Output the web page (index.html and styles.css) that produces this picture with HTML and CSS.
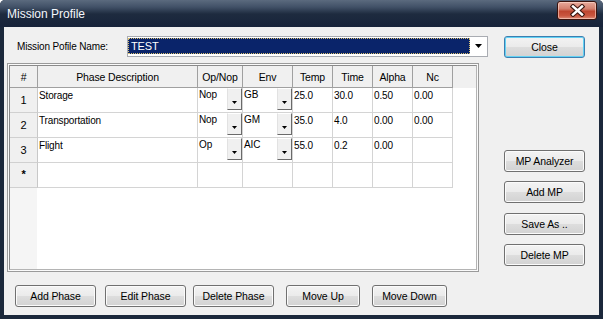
FILE: index.html
```
<!DOCTYPE html>
<html>
    <head>
        <meta charset="UTF-8">
        <title>Mission Profile</title>
        <link rel="stylesheet" href="styles.css">
    </head>

    <body>
        <div class="window">
            <div class="titlebar">
                <span class="title">Mission Profile</span>
                <span class="close-x">
                    <svg width="15" height="13" viewBox="0 0 15 13">
                        <path d="M3 2.5 L12 10.5 M12 2.5 L3 10.5" stroke="#3b1610" stroke-width="4.6" stroke-linecap="square"/>
                        <path d="M3 2.5 L12 10.5 M12 2.5 L3 10.5" stroke="#ffffff" stroke-width="2.4" stroke-linecap="square"/>
                    </svg>
                </span>
            </div>

            <div class="client">
                <div class="name_row">
                    <label class="name_label">Mission Pofile Name:</label>
                    <div class="combo">
                        <span class="combo_value">TEST</span>
                        <span class="combo_arrow"><span class="arrow_big"></span></span>
                    </div>
                    <button class="btn btn_default btn_close">Close</button>
                </div>

                <div class="main_row">
                    <div class="grid_frame">
                        <div class="grid">
                            <div class="hd">#</div>
                            <div class="hd">Phase Description</div>
                            <div class="hd">Op/Nop</div>
                            <div class="hd">Env</div>
                            <div class="hd">Temp</div>
                            <div class="hd">Time</div>
                            <div class="hd">Alpha</div>
                            <div class="hd">Nc</div>
                            <div class="hd hd_fill"></div>

                            <div class="rh">1</div>
                            <div class="cell">Storage</div>
                            <div class="cell pick">Nop<span class="dd"><span class="arrow_small"></span></span></div>
                            <div class="cell pick">GB<span class="dd"><span class="arrow_small"></span></span></div>
                            <div class="cell">25.0</div>
                            <div class="cell">30.0</div>
                            <div class="cell">0.50</div>
                            <div class="cell">0.00</div>
                            <div class="fill"></div>

                            <div class="rh">2</div>
                            <div class="cell">Transportation</div>
                            <div class="cell pick">Nop<span class="dd"><span class="arrow_small"></span></span></div>
                            <div class="cell pick">GM<span class="dd"><span class="arrow_small"></span></span></div>
                            <div class="cell">35.0</div>
                            <div class="cell">4.0</div>
                            <div class="cell">0.00</div>
                            <div class="cell">0.00</div>
                            <div class="fill"></div>

                            <div class="rh">3</div>
                            <div class="cell">Flight</div>
                            <div class="cell pick">Op<span class="dd"><span class="arrow_small"></span></span></div>
                            <div class="cell pick">AIC<span class="dd"><span class="arrow_small"></span></span></div>
                            <div class="cell">55.0</div>
                            <div class="cell">0.2</div>
                            <div class="cell">0.00</div>
                            <div class="cell"></div>
                            <div class="fill"></div>

                            <div class="rh rh_new">*</div>
                            <div class="cell"></div>
                            <div class="cell"></div>
                            <div class="cell"></div>
                            <div class="cell"></div>
                            <div class="cell"></div>
                            <div class="cell"></div>
                            <div class="cell"></div>
                            <div class="fill"></div>
                        </div>
                    </div>

                    <div class="side_buttons">
                        <button class="btn">MP Analyzer</button>
                        <button class="btn">Add MP</button>
                        <button class="btn btn_saveas">Save As ..</button>
                        <button class="btn">Delete MP</button>
                    </div>
                </div>

                <div class="bottom_row">
                    <button class="btn btn_add">Add Phase</button>
                    <button class="btn btn_edit">Edit Phase</button>
                    <button class="btn btn_delete">Delete Phase</button>
                    <button class="btn btn_up">Move Up</button>
                    <button class="btn btn_down">Move Down</button>
                </div>
            </div>
        </div>
    </body>
</html>
```

FILE: styles.css
```
body {
    margin: 0;
    background: #ffffff;
}
.window {
    display: flex;
    flex-direction: column;
    width: 603px;
    height: 319px;
    box-sizing: border-box;
    background: #1b283b;
    border-radius: 5px 5px 0 0;
    font-family: "Liberation Sans", Arial, sans-serif;
    font-size: 10px;
    letter-spacing: -0.15px;
    color: #000;
}
.titlebar {
    display: flex;
    justify-content: space-between;
    height: 27px;
    padding-left: 7px;
    border-radius: 5px 5px 0 0;
    background: linear-gradient(#5b6a7e 0, #415167 7px, #1e2b3f 14px, #17233a 27px);
}
.title {
    margin-top: 7px;
    font-size: 12px;
    letter-spacing: 0;
    color: #f4f7fb;
}
.close-x {
    display: flex;
    align-items: center;
    justify-content: center;
    width: 40px;
    height: 19px;
    margin: 1px 6px 0 0;
    box-sizing: border-box;
    border: 1px solid #3a120c;
    border-radius: 3px;
    background: linear-gradient(#e8aa9c 0%, #d4806e 40%, #bf4630 55%, #c9563f 80%, #dc8a76 100%);
    box-shadow: inset 0 0 0 1px rgba(255, 225, 215, 0.55);
}
.client {
    flex: 1;
    margin: 0 4px 4px 4px;
    background: #f0f0f0;
}
.name_row {
    display: flex;
    align-items: flex-start;
    margin: 9px 0 0 13px;
    height: 22px;
}
.name_label {
    width: 110px;
    line-height: 21px;
}
.combo {
    display: flex;
    width: 361px;
    height: 21px;
    box-sizing: border-box;
    border: 1px solid #a9acb2;
    padding: 1px 0 0 0;
    background: #ffffff;
}
.combo_value {
    flex: 1;
    height: 16px;
    padding-left: 3px;
    font-size: 11px;
    line-height: 16px;
    color: #ffffff;
    background: #0a246a;
    outline: 1px dotted #d8c070;
    outline-offset: -1px;
}
.combo_arrow {
    display: flex;
    justify-content: center;
    width: 17px;
    padding-top: 6px;
}
.arrow_big {
    width: 7px;
    height: 4px;
    background: #000;
    clip-path: polygon(0 0, 100% 0, 50% 100%);
}
.btn {
    width: 81px;
    height: 22px;
    padding: 0;
    box-sizing: border-box;
    border: 1px solid #707070;
    border-radius: 3px;
    background: linear-gradient(#f3f3f3 0%, #ebebeb 48%, #dddddd 52%, #d2d2d2 100%);
    box-shadow: inset 0 0 0 1px #fbfbfb;
    font-family: inherit;
    font-size: 10.5px;
    letter-spacing: -0.1px;
    color: #000;
}
.btn_default {
    border-color: #3c7fb1;
    box-shadow: inset 0 0 0 1px #63d2f4;
}
.btn_close {
    margin-left: 16px;
}
.main_row {
    display: flex;
    margin: 5px 0 0 3px;
}
.grid_frame {
    width: 472px;
    height: 209px;
    box-sizing: border-box;
    border: 1px solid #9a9a9a;
    padding: 1px;
    background: #fafafa;
}
.grid {
    display: grid;
    grid-template-columns: 28px 160px 45px 50px 40px 40px 40px 40px 1fr;
    grid-template-rows: 22px repeat(4, 25px);
    align-content: start;
    height: 100%;
    box-sizing: border-box;
    border: 1px solid #a0a0a0;
    border-color: #8a8a8a #b4b4b4 #b4b4b4 #8a8a8a;
    background: linear-gradient(90deg, #f5f5f5 27px, #ffffff 27px);
}
.hd {
    display: flex;
    align-items: center;
    justify-content: center;
    box-sizing: border-box;
    font-size: 10.5px;
    border-right: 1px solid #a0a0a0;
    border-bottom: 1px solid #a0a0a0;
    background: #f0f0f0;
}
.hd_fill {
    border: none;
}
.rh {
    display: flex;
    align-items: center;
    justify-content: center;
    box-sizing: border-box;
    font-size: 11px;
    border-right: 1px solid #c8c8c8;
    border-bottom: 1px solid #d0d0d0;
    background: #f0f0f0;
}
.rh_new {
    font-weight: bold;
    padding-bottom: 3px;
}
.cell {
    box-sizing: border-box;
    padding: 1px 0 0 1px;
    line-height: 13px;
    border-right: 1px solid #d4d4d4;
    border-bottom: 1px solid #d4d4d4;
    background: #ffffff;
    white-space: nowrap;
}
.pick {
    display: flex;
    justify-content: space-between;
    align-items: flex-start;
    padding-top: 0;
}
.pick::first-line {
    line-height: 15px;
}
.dd {
    display: flex;
    justify-content: center;
    width: 15px;
    height: 22px;
    box-sizing: border-box;
    padding-top: 12px;
    border: 1px solid;
    border-color: #ffffff #6a6a6a #6a6a6a #e2e2e2;
    background: #f0f0f0;
}
.arrow_small {
    width: 5px;
    height: 3px;
    background: #000;
    clip-path: polygon(0 0, 100% 0, 50% 100%);
}
.side_buttons {
    display: flex;
    flex-direction: column;
    gap: 9px;
    margin-left: 25px;
    padding-top: 87px;
}
.btn_saveas {
    margin-top: 1px;
}
.bottom_row {
    display: flex;
    margin: 13px 0 0 11px;
}
.btn_edit {
    margin-left: 9px;
}
.btn_delete {
    margin-left: 7px;
}
.btn_up {
    width: 74px;
    margin-left: 12px;
}
.btn_down {
    width: 75px;
    margin-left: 12px;
}
```
